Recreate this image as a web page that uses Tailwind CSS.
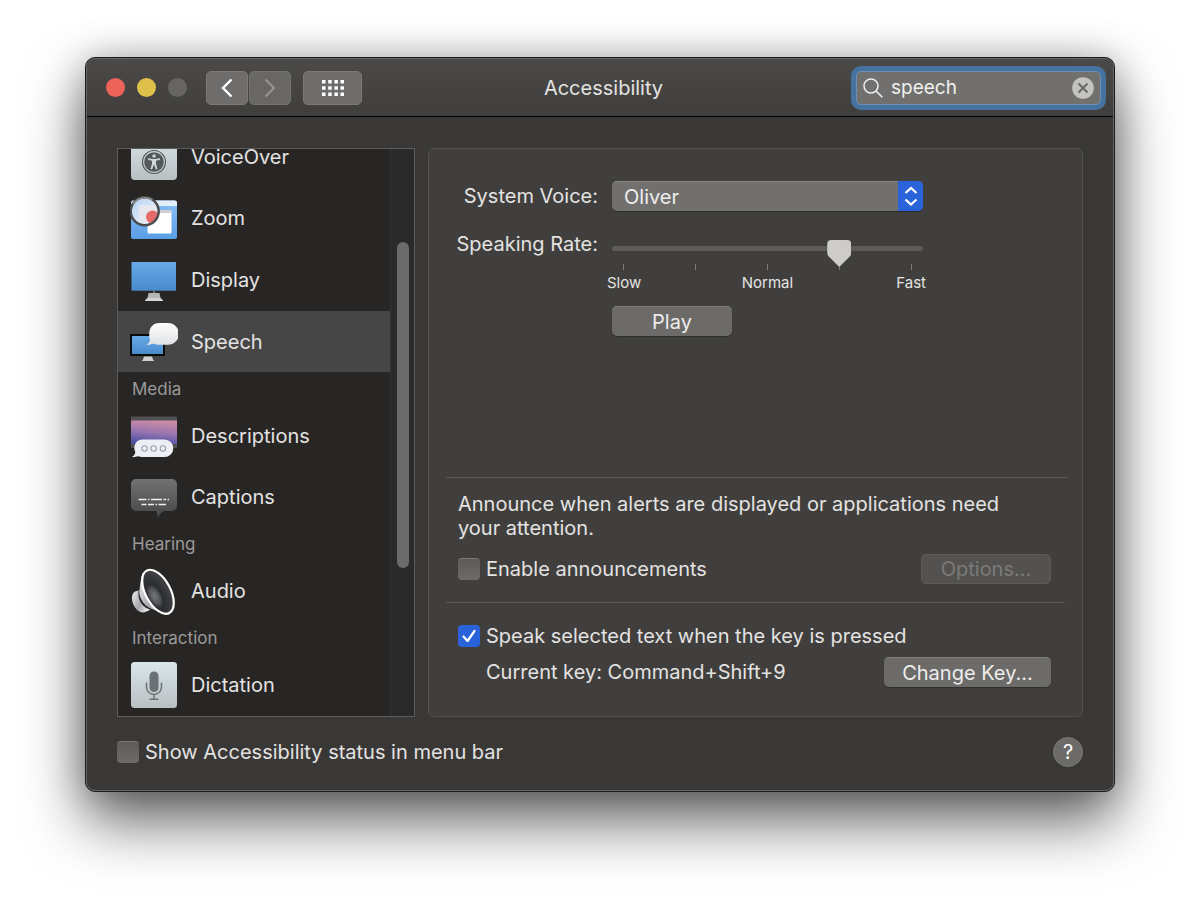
<!DOCTYPE html>
<html lang="en">
<head>
<meta charset="utf-8">
<meta name="viewport" content="width=device-width, initial-scale=1">
<title>Accessibility</title>
<script src="https://cdn.jsdelivr.net/npm/@tailwindcss/browser@4"></script>
</head>
<body class="bg-white font-['Inter','Liberation_Sans',sans-serif] text-[20px] leading-6 text-[#e4e3e2] antialiased">
<div class="min-h-screen overflow-hidden px-[85px] pt-[57px] pb-[113px]">
<div class="rounded-[10px] border border-[#1c1c1c] bg-[#3a3836] shadow-[0_30px_60px_rgba(0,0,0,0.6),0_0_36px_rgba(0,0,0,0.25)]">
<div class="overflow-hidden rounded-[9px] border border-[#656462]">

  <header class="flex h-[58px] items-center border-b border-black bg-linear-to-b from-[#4b4a48] to-[#3f3e3c] px-3">
    <div class="flex flex-1 items-center pl-[7px]">
      <div class="flex gap-3">
        <button aria-label="Close" class="size-[19px] rounded-full bg-[#ed6359]"></button>
        <button aria-label="Minimize" class="size-[19px] rounded-full bg-[#dfc04b]"></button>
        <button aria-label="Full screen" disabled class="size-[19px] rounded-full bg-[#666563]"></button>
      </div>
      <div class="ml-[19px] flex gap-px">
        <button aria-label="Back" class="flex h-[34px] w-[42px] items-center justify-center rounded-[5px] border border-[#7b7a78] bg-[#6e6d6b]">
          <svg width="12" height="20" viewBox="0 0 12 20" fill="none" stroke="#fff" stroke-width="2.4"><path d="M10.5 1.5 2 10l8.500 8.500"/></svg>
        </button>
        <button aria-label="Forward" disabled class="flex h-[34px] w-[42px] items-center justify-center rounded-[5px] border border-[#757472] bg-[#686765]">
          <svg width="12" height="20" viewBox="0 0 12 20" fill="none" stroke="#989795" stroke-width="2"><path d="M1.500 1.500 10 10l-8.500 8.500"/></svg>
        </button>
      </div>
      <button aria-label="Show all" class="ml-3 flex h-[34px] w-[59px] items-center justify-center rounded-[5px] border border-[#7b7a78] bg-[#6e6d6b]">
        <svg width="22" height="16" viewBox="0 0 22 16" fill="#fff"><path d="M0 0h3.500v3.500H0zM6.200 0h3.500v3.500H6.200zM12.400 0h3.500v3.500h-3.500zM18.500 0H22v3.500h-3.500zM0 6.200h3.500v3.500H0zM6.200 6.200h3.500v3.500H6.200zM12.400 6.200h3.500v3.500h-3.500zM18.500 6.200H22v3.500h-3.500zM0 12.500h3.500V16H0zM6.200 12.500h3.500V16H6.200zM12.400 12.500h3.500V16h-3.500zM18.500 12.500H22V16h-3.500z"/></svg>
      </button>
    </div>
    <h1 class="text-[20px]">Accessibility</h1>
    <div class="flex flex-1 justify-end">
      <div class="flex h-[34px] w-[245px] items-center gap-2 rounded-[5px] border border-[#6c90b5] bg-[#71706e] px-[6px] ring-[5px] ring-[#45729f]">
        <svg class="shrink-0" width="20" height="20" viewBox="0 0 20 20" fill="none" stroke="#eee" stroke-width="1.600"><circle cx="8" cy="8" r="7"/><path d="m13 13 6.300 6.300"/></svg>
        <input type="text" aria-label="Search" value="speech" class="min-w-0 flex-1 bg-transparent text-[19px] text-[#f0f0ef] outline-none">
        <button aria-label="Clear search" class="shrink-0"><svg class="block" width="22" height="22" viewBox="0 0 22 22"><circle cx="11" cy="11" r="10.800" fill="#c4c3c2"/><path d="m6.500 6.500 9 9m0-9-9 9" stroke="#6c6b69" stroke-width="2.200"/></svg></button>
      </div>
    </div>
  </header>

  <main class="px-[30px] pt-[31px] pb-[23px]">
    <div class="flex gap-[13px]">

      <nav aria-label="Accessibility features" class="flex h-[569px] w-[298px] shrink-0 overflow-hidden border border-[#5d5c5a] bg-[#282625]">
        <div class="flex flex-1 flex-col justify-end pb-px">
          <a href="#voiceover" class="flex h-[61px] shrink-0 items-center gap-[13px] pl-3">
            <svg width="48" height="48" viewBox="0 0 48 48"><defs><linearGradient id="plate" x2="0" y2="1"><stop stop-color="#d9e6ea"/><stop offset="1" stop-color="#b9c0c2"/></linearGradient></defs><rect x="1" y="0" width="46" height="47" rx="4" fill="url(#plate)"/><circle cx="24" cy="29" r="11.500" fill="none" stroke="#55595b" stroke-width="1.200"/><circle cx="24" cy="29" r="9.800" fill="#55595b"/><circle cx="24" cy="23" r="1.700" fill="#d0d8da"/><path d="M18 25.300 22.500 26h3l4.500-.7v1.500l-4 .9v3l1.500 5.300-1.500.5-2-5-2 5-1.500-.5 1.500-5.300v-3l-4-.9z" fill="#d0d8da"/></svg>
            <span>VoiceOver</span>
          </a>
          <a href="#zoom" class="flex h-[62px] shrink-0 items-center gap-[13px] pl-3">
            <svg width="48" height="48" viewBox="0 0 48 48"><defs><linearGradient id="zw" x2="0" y2="1"><stop stop-color="#8abdf4"/><stop offset="1" stop-color="#5a9fe6"/></linearGradient><linearGradient id="lens" x2="1" y2="1"><stop stop-color="#b5d2f3"/><stop offset="1" stop-color="#f5f7fb"/></linearGradient><clipPath id="lc"><circle cx="14.700" cy="17.300" r="13"/></clipPath></defs><rect x="1" y="6.500" width="46" height="38.500" rx="2.500" fill="url(#zw)"/><path d="M1 12V9a2.500 2.500 0 0 1 2.500-2.500h41A2.500 2.500 0 0 1 47 9v3z" fill="#e4eefb"/><rect x="17.500" y="16" width="24" height="23.500" rx="1.500" fill="#fff"/><path d="M17.500 19v-1.500A1.500 1.500 0 0 1 19 16h21a1.500 1.500 0 0 1 1.500 1.500V19z" fill="#cfcfd2"/><circle cx="14.700" cy="17.300" r="13" fill="url(#lens)"/><g clip-path="url(#lc)"><rect x="9" y="11" width="24" height="18" rx="2" fill="#e7e8ef"/><circle cx="22.500" cy="23" r="6.500" fill="#e66a6a"/></g><circle cx="14.700" cy="17.300" r="14" fill="none" stroke="#4b4b4c" stroke-width="2.500"/><path d="M3 10a14 14 0 0 1 19-4" fill="none" stroke="#969698" stroke-width="1.500"/></svg>
            <span>Zoom</span>
          </a>
          <a href="#display" class="flex h-[62px] shrink-0 items-center gap-[13px] pl-3">
            <svg width="48" height="48" viewBox="0 0 48 48"><defs><linearGradient id="scr" x2="0" y2="1"><stop stop-color="#68a9e8"/><stop offset="1" stop-color="#488bcb"/></linearGradient></defs><path fill="url(#scr)" d="M1.500 6H46v28.800H1.500z"/><path fill="#77777a" d="M23 35h2v2h-2z"/><path d="M18.500 37h11l1 5 2.500 2.500V45H15v-.5l2.500-2.500z" fill="#b6b6b8"/><path d="M17.500 42h13l2.500 2.500V45H15v-.5z" fill="#d3d3d4"/></svg>
            <span>Display</span>
          </a>
          <a href="#speech" aria-current="page" class="flex h-[61px] shrink-0 items-center gap-[13px] bg-[#464646] pl-3">
            <svg width="48" height="48" viewBox="0 0 48 48"><defs><linearGradient id="bub" x2="0" y2="1"><stop stop-color="#fdfdfd"/><stop offset="1" stop-color="#dfe1e4"/></linearGradient></defs><path d="M0 16h35v22H0z" fill="#0b0b0c"/><path fill="url(#scr)" d="M2 18h31v18H2z"/><path d="M14 38.500h8l1 3 1.500 1.500h-13l1.500-1.500z" fill="#d0d0d1"/><path d="M29.500 5h8.500a10.800 10.800 0 0 1 0 21.800H29c-3 0-4-1.300-6-1-2 .4-3.500 1.500-6.500 1.200 1.500-1.300 3-2.700 3.500-4.500C17.500 12.500 21 5 29.500 5z" fill="url(#bub)"/></svg>
            <span>Speech</span>
          </a>
          <h2 class="flex h-[33px] shrink-0 items-center pl-[14px] text-[17px] text-[#9b9a99]">Media</h2>
          <a href="#descriptions" class="flex h-[61px] shrink-0 items-center gap-[13px] pl-3">
            <svg width="48" height="48" viewBox="0 0 48 48"><defs><linearGradient id="sky" x1=".6" x2=".4" y2="1"><stop stop-color="#cd8da4"/><stop offset=".5" stop-color="#9a76b0"/><stop offset="1" stop-color="#4b51a5"/></linearGradient></defs><path d="M1 4.500h46V36H1z" fill="#515053"/><path fill="url(#sky)" d="M1 8.500h46V32H1z"/><path d="M13 27.500h21.500a8.800 8.800 0 0 1 0 17.600H13c-2.500 0-3.500-.9-5-.8-2 .2-3.500 1.200-6 .7 2-1.500 3.200-2.700 3.300-5C2.500 34 6 27.500 13 27.500z" fill="#eeeff5"/><g fill="none" stroke="#9c9dab" stroke-width="1.100"><circle cx="14.500" cy="36.500" r="2.700"/><circle cx="23.700" cy="36.500" r="2.700"/><circle cx="32.900" cy="36.500" r="2.700"/></g></svg>
            <span>Descriptions</span>
          </a>
          <a href="#captions" class="flex h-[61px] shrink-0 items-center gap-[13px] pl-3">
            <svg width="48" height="48" viewBox="0 0 48 48"><defs><linearGradient id="cap" x2="0" y2="1"><stop stop-color="#727272"/><stop offset="1" stop-color="#464646"/></linearGradient></defs><path d="M6 6h36a5 5 0 0 1 5 5v22a5 5 0 0 1-5 5h-8c-3 1-4.500 4-6.200 6.500-1-2-.3-5-1.800-6.500H6a5 5 0 0 1-5-5V11a5 5 0 0 1 5-5z" fill="url(#cap)"/><path d="M8.500 26.500h8m1.500 0h1.500m1.500 0h11m1.500 0H36m1.500 0h1.500M11.500 31.500h5m1.500 0h6m1.500 0H27m1.500 0h7.500" stroke="#eee" stroke-width="1.500"/></svg>
            <span>Captions</span>
          </a>
          <h2 class="flex h-[33px] shrink-0 items-center pl-[14px] text-[17px] text-[#9b9a99]">Hearing</h2>
          <a href="#audio" class="flex h-[61px] shrink-0 items-center gap-[13px] pl-3">
            <svg width="48" height="48" viewBox="0 0 48 48"><defs><linearGradient id="horn" x2="1" y2=".6"><stop stop-color="#f2f2f4"/><stop offset=".6" stop-color="#a5a5aa"/><stop offset="1" stop-color="#e4e4e6"/></linearGradient><radialGradient id="cone" cx=".3" cy=".55" r=".6"><stop stop-color="#77797d"/><stop offset=".3" stop-color="#505256"/><stop offset=".45" stop-color="#2a2c30"/><stop offset="1" stop-color="#3e4044"/></radialGradient></defs><path d="M7 24c-4 0-6 5-4.500 11C4 41 9 46 14 45.500l6-2.500L10 23z" fill="url(#horn)"/><path d="M8.500 24.500c-1 9 5 17 12 18l2-3-10-19z" fill="#222225"/><path d="M12.500 6C10 15 10 21 9.300 26c1 8 6.700 14 12.700 16l17 5.700L28 20z" fill="url(#horn)"/><ellipse cx="28" cy="24.800" rx="12.500" ry="24" transform="rotate(-28 28 24.800)" fill="url(#cone)" stroke="#fff" stroke-width="2.200"/></svg>
            <span>Audio</span>
          </a>
          <h2 class="flex h-[33px] shrink-0 items-center pl-[14px] text-[17px] text-[#9b9a99]">Interaction</h2>
          <a href="#dictation" class="flex h-[61px] shrink-0 items-center gap-[13px] pl-3">
            <svg width="48" height="48" viewBox="0 0 48 48"><rect x="1" y="1" width="46" height="46" rx="3.500" fill="url(#plate)"/><rect x="19.500" y="10.500" width="9" height="20.500" rx="4.500" fill="#6b7275"/><path d="M16.500 21.500V26a7.500 7.500 0 0 0 15 0v-4.500M24 33.500V38m-4.500.200h9" fill="none" stroke="#6b7275" stroke-width="1.500"/></svg>
            <span>Dictation</span>
          </a>
        </div>
        <div class="flex w-6 flex-col items-center border-l border-[#343333] bg-[#2a2a2b] pt-[93px]">
          <div class="h-[326px] w-3 rounded-full bg-[#6b6b6b]"></div>
        </div>
      </nav>

      <section aria-label="Speech" class="flex min-w-0 flex-1 flex-col rounded-md border border-[#52514f] bg-[#403f3d] px-[17px]">
        <div class="grid grid-cols-[152px_311px] gap-x-[14px] pt-8">
          <label for="voice" class="pt-[3px] text-right">System Voice:</label>
          <div class="relative">
            <select id="voice" class="block h-[30px] w-full appearance-none rounded-[5px] border-t border-[#898886] bg-[#71706e] px-3 text-[20px] text-[#eeedec] shadow-[0_1px_1px_rgba(0,0,0,0.3)]"><option>Oliver</option></select>
            <svg class="pointer-events-none absolute top-0 right-0" width="25" height="30" viewBox="0 0 25 30"><path d="M0 0h20a5 5 0 0 1 5 5v20a5 5 0 0 1-5 5H0z" fill="#2962d9"/><path d="m7.500 12 5.500-5 5.500 5m-11 6.500 5.500 5 5.500-5" fill="none" stroke="#fff" stroke-width="2.300"/></svg>
          </div>
          <label for="rate" class="pt-[21px] text-right">Speaking Rate:</label>
          <div class="pt-7">
            <div class="relative h-8">
              <div class="flex justify-between px-[11px] pt-[25px]">
                <i class="h-[6px] w-px bg-[#7d7c7a]"></i><i class="h-[6px] w-px bg-[#7d7c7a]"></i><i class="h-[6px] w-px bg-[#7d7c7a]"></i><i class="h-[6px] w-px bg-[#7d7c7a]"></i><i class="h-[6px] w-px bg-[#7d7c7a]"></i>
              </div>
              <input id="rate" type="range" min="0" max="100" step="25" value="75" class="absolute inset-x-0 top-0 h-[19px] w-full appearance-none bg-transparent [&::-webkit-slider-runnable-track]:h-[5px] [&::-webkit-slider-runnable-track]:rounded-full [&::-webkit-slider-runnable-track]:bg-[#5c5b59] [&::-webkit-slider-thumb]:-mt-[6px] [&::-webkit-slider-thumb]:h-[27px] [&::-webkit-slider-thumb]:w-6 [&::-webkit-slider-thumb]:appearance-none [&::-webkit-slider-thumb]:bg-[#cdcccb] [&::-webkit-slider-thumb]:[clip-path:path('M4_0H20Q24_0_24_4V13Q24_15_22.500_16.500L13_26Q12_27_11_26L1.500_16.500Q0_15_0_13V4Q0_0_4_0Z')]">
            </div>
            <div class="-mx-[19px] grid grid-cols-3 pt-[2px] text-[15px] leading-5">
              <span class="pl-[14px]">Slow</span><span class="text-center">Normal</span><span class="pr-4 text-right">Fast</span>
            </div>
          </div>
          <button class="col-start-2 mt-[13px] h-[30px] w-[120px] rounded-[5px] border-t border-[#807f7d] bg-[#6c6b69] text-[#eeedec] shadow-[0_1px_1px_rgba(0,0,0,0.3)]">Play</button>
        </div>

        <div class="mt-[141px] mr-[-3px] border-t border-[#5b5a58] px-3 pt-[14px]">
          <p class="max-w-[560px]">Announce when alerts are displayed or applications need your attention.</p>
          <div class="mt-[14px] flex items-center justify-between pr-[5px]">
            <label class="flex items-center gap-[6px]"><input type="checkbox" class="size-[22px] appearance-none rounded-[4px] border-t border-[#7b7a78] bg-linear-to-b from-[#5c5b59] to-[#6c6b69]">Enable announcements</label>
            <button disabled class="h-[30px] w-[130px] rounded-[5px] border border-[#5c5b59] bg-[#535250] text-[#7b7a78]">Options...</button>
          </div>
        </div>

        <div class="mt-[18px] border-t border-[#5b5a58] px-3 pt-[21px]">
          <label class="flex items-center gap-[6px]">
            <span class="relative size-[22px]"><input type="checkbox" checked class="block size-[22px] appearance-none rounded-[4px] bg-[#2962d9]"><svg class="pointer-events-none absolute inset-0" width="22" height="22" viewBox="0 0 22 22" fill="none" stroke="#fff" stroke-width="2.200" stroke-linecap="round" stroke-linejoin="round"><path d="m5.500 11.500 4 4.500 7-10"/></svg></span>
            Speak selected text when the key is pressed</label>
          <div class="mt-[9px] flex items-center justify-between pr-[2px] pl-7">
            <span>Current key: Command+Shift+9</span>
            <button class="h-[30px] w-[167px] rounded-[5px] border-t border-[#807f7d] bg-[#6c6b69] text-[#eeedec] shadow-[0_1px_1px_rgba(0,0,0,0.3)]">Change Key...</button>
          </div>
        </div>
      </section>
    </div>

    <footer class="mt-5 flex items-center justify-between">
      <label class="flex items-center gap-[6px]"><input type="checkbox" class="size-[22px] appearance-none rounded-[4px] border-t border-[#7b7a78] bg-linear-to-b from-[#5c5b59] to-[#6c6b69]">Show Accessibility status in menu bar</label>
      <button aria-label="Help" class="size-[30px] rounded-full border border-[#7b7a78] bg-[#6c6b69] text-[20px] text-white">?</button>
    </footer>
  </main>
</div>
</div>
</div>
</body>
</html>
